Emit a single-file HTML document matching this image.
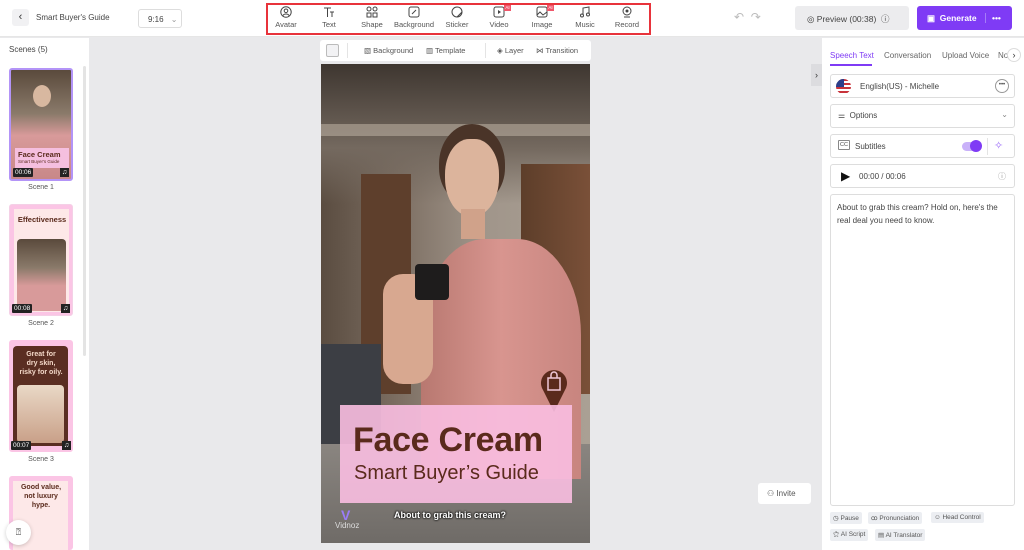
<!DOCTYPE html>
<html><head><meta charset="utf-8">
<style>
*{margin:0;padding:0;box-sizing:border-box}
body{width:1024px;height:550px;overflow:hidden;font-family:"Liberation Sans",sans-serif;background:#e9e9eb;position:relative;color:#333}
.abs{position:absolute}
.top{left:0;top:0;width:1024px;height:37px;background:#fff;border-bottom:1px solid #e6e6e6}
.tool{position:absolute;top:6px;width:40px;text-align:center;font-size:7.5px;color:#555}
.tool svg{display:block;margin:0 auto 2px}
.left{left:0;top:38px;width:89px;height:512px;background:#fff}
.right{left:822px;top:38px;width:202px;height:512px;background:#fff}
.box{position:absolute;left:830px;width:185px;border:1px solid #ddd;border-radius:3px;background:#fff;font-size:8px;color:#444}
.thumb{position:absolute;left:9px;width:64px;border-radius:3px;overflow:hidden}
.tag{position:absolute;background:#eceef2;font-size:6.5px;color:#555;padding:2px 3px;border-radius:2px}
.time{position:absolute;left:2px;bottom:2px;background:#222;color:#fff;font-size:6.5px;padding:1px 2px;border-radius:1px}
.note{position:absolute;right:2px;bottom:2px;width:9px;height:9px;background:#222;color:#fff;font-size:7px;line-height:9px;text-align:center}
.lbl{position:absolute;left:9px;width:64px;text-align:center;font-size:7px;color:#555}
</style></head><body>
<div class="abs top"></div>
<div class="abs" style="left:12px;top:9px;width:17px;height:17px;background:#f1f1f3;border-radius:3px;font-size:11px;text-align:center;line-height:17px;color:#333">‹</div>
<div class="abs" style="left:36px;top:13px;font-size:8px;color:#444">Smart Buyer's Guide</div>
<div class="abs" style="left:138px;top:9px;width:44px;height:19px;border:1px solid #ddd;border-radius:3px;font-size:8px;color:#444;padding:5px 0 0 9px">9:16 <span style="color:#999;margin-left:5px">⌄</span></div>
<div class="abs" style="left:266px;top:3px;width:385px;height:32px;border:2px solid #e8333b"></div>
<div class="tool" style="left:266px"><svg width="12" height="12" viewBox="0 0 12 12"><circle cx="6" cy="6" r="5.2" fill="none" stroke="#444"/><circle cx="6" cy="4.8" r="1.8" fill="none" stroke="#444"/><path d="M3 9.5c1-2 5-2 6 0" fill="none" stroke="#444"/></svg>Avatar</div>
<div class="tool" style="left:309px"><svg width="12" height="12" viewBox="0 0 12 12"><path d="M1 2h7M4.5 2v9M7 6h4M9 6v5" stroke="#444" fill="none"/></svg>Text</div>
<div class="tool" style="left:352px"><svg width="12" height="12" viewBox="0 0 12 12"><circle cx="3" cy="3" r="2" fill="none" stroke="#444"/><circle cx="9" cy="3" r="2" fill="none" stroke="#444"/><rect x="1" y="7" width="4" height="4" fill="none" stroke="#444"/><rect x="7" y="7" width="4" height="4" fill="none" stroke="#444"/></svg>Shape</div>
<div class="tool" style="left:394px"><svg width="12" height="12" viewBox="0 0 12 12"><rect x="1" y="1" width="10" height="10" rx="2" fill="none" stroke="#444"/><path d="M4 8l4-4" stroke="#444"/></svg>Background</div>
<div class="tool" style="left:437px"><svg width="12" height="12" viewBox="0 0 12 12"><path d="M11 6A5 5 0 1 1 6 1c3 0 5 2 5 5l-5 5" fill="none" stroke="#444"/></svg>Sticker</div>
<div class="tool" style="left:479px"><svg width="12" height="12" viewBox="0 0 12 12"><rect x="1" y="1" width="10" height="10" rx="2" fill="none" stroke="#444"/><path d="M5 4v4l3-2z" fill="#444"/></svg>Video</div>
<div class="abs" style="left:504px;top:5px;width:7px;height:6px;background:#f0566a;color:#fff;font-size:4.5px;text-align:center;line-height:6px">AI</div>
<div class="tool" style="left:522px"><svg width="12" height="12" viewBox="0 0 12 12"><rect x="1" y="1" width="10" height="10" rx="2" fill="none" stroke="#444"/><path d="M1 9l3-3 3 3 4-3" fill="none" stroke="#444"/></svg>Image</div>
<div class="abs" style="left:547px;top:5px;width:7px;height:6px;background:#f0566a;color:#fff;font-size:4.5px;text-align:center;line-height:6px">AI</div>
<div class="tool" style="left:565px"><svg width="12" height="12" viewBox="0 0 12 12"><path d="M4 9V2l6-1v7" fill="none" stroke="#444"/><circle cx="3" cy="9.5" r="1.5" fill="none" stroke="#444"/><circle cx="9" cy="8.5" r="1.5" fill="none" stroke="#444"/></svg>Music</div>
<div class="tool" style="left:607px"><svg width="12" height="12" viewBox="0 0 12 12"><circle cx="6" cy="5" r="4" fill="none" stroke="#444"/><circle cx="6" cy="5" r="1.5" fill="#444"/><path d="M3 11h6" stroke="#444"/></svg>Record</div>
<div class="abs" style="left:734px;top:10px;font-size:12px;color:#bbb">↶ &nbsp;↷</div>
<div class="abs" style="left:795px;top:6px;width:114px;height:24px;background:#ececee;border-radius:3px;font-size:8.5px;color:#444;padding:7px 0 0 12px">◎ Preview (00:38) &nbsp;ⓘ</div>
<div class="abs" style="left:917px;top:6px;width:95px;height:24px;background:#7f3bf5;border-radius:3px;font-size:8.5px;color:#fff;font-weight:bold;padding:7px 0 0 10px">▣ &nbsp;Generate <span style="border-left:1px solid #a57cf8;margin-left:6px;padding-left:6px">•••</span></div>

<div class="abs left"></div>
<div class="abs" style="left:9px;top:45px;font-size:8px;color:#444">Scenes (5)</div>
<div class="abs" style="left:83px;top:66px;width:3px;height:290px;background:#e4e4e4;border-radius:2px"></div>
<div class="thumb" style="top:68px;height:113px;border:2px solid #b394f7;background:linear-gradient(#5a4a3c,#8a7a6a 40%,#d89a9a 60%,#c88888)">
<div class="abs" style="left:22px;top:15px;width:18px;height:22px;border-radius:50%;background:#d8b8a0"></div>
<div class="abs" style="left:4px;top:78px;width:54px;height:20px;background:#f5bfdf;font-size:7.5px;font-weight:bold;color:#5a2a1c;padding:2px 0 0 3px">Face Cream<div style="font-size:4.5px;font-weight:normal">Smart Buyer's Guide</div></div>
<div class="time">00:06</div><div class="note">♫</div></div>
<div class="lbl" style="top:184px">Scene 1</div>
<div class="thumb" style="top:204px;height:112px;background:#fbc5e5;border:1px solid #f4d0e6">
<div class="abs" style="left:4px;top:4px;width:55px;height:103px;background:#fde8e8"></div>
<div class="abs" style="left:5px;top:10px;width:54px;text-align:center;font-size:7.5px;font-weight:bold;color:#5a2a1c">Effectiveness</div>
<div class="abs" style="left:7px;top:34px;width:49px;height:72px;border-radius:4px;background:linear-gradient(#5a4a3c,#8a7a6a 40%,#d89a9a 65%)"></div>
<div class="time">00:08</div><div class="note">♫</div></div>
<div class="lbl" style="top:320px">Scene 2</div>
<div class="thumb" style="top:340px;height:112px;background:#fbc5e5">
<div class="abs" style="left:4px;top:6px;width:55px;height:100px;border-radius:4px;background:#5a2e22"></div>
<div class="abs" style="left:5px;top:10px;width:54px;text-align:center;font-size:7px;font-weight:bold;color:#f3d8c8;line-height:9px">Great for<br>dry skin,<br>risky for oily.</div>
<div class="abs" style="left:8px;top:45px;width:47px;height:58px;border-radius:4px;background:linear-gradient(#e9d8c6,#c9a088)"></div>
<div class="time">00:07</div><div class="note">♫</div></div>
<div class="lbl" style="top:456px">Scene 3</div>
<div class="thumb" style="top:476px;height:74px;background:#fbc5e5">
<div class="abs" style="left:4px;top:5px;width:55px;height:70px;background:#fde8e8"></div>
<div class="abs" style="left:5px;top:7px;width:54px;text-align:center;font-size:7px;font-weight:bold;color:#5a2a1c;line-height:9px">Good value,<br>not luxury<br>hype.</div></div>
<div class="abs" style="left:6px;top:520px;width:25px;height:25px;border-radius:50%;background:#fff;box-shadow:0 1px 4px rgba(0,0,0,.2);font-size:9px;text-align:center;line-height:25px">⍰</div>

<div class="abs" style="left:320px;top:40px;width:271px;height:21px;background:#fff;border-radius:3px;font-size:7.5px;color:#555">
<div class="abs" style="left:6px;top:4px;width:13px;height:13px;border:1px solid #bbb;border-radius:2px;background:#f2f2f4"></div>
<div class="abs" style="left:27px;top:3px;width:1px;height:15px;background:#e4e4e4"></div>
<span class="abs" style="left:44px;top:6px">▧ Background</span><span class="abs" style="left:106px;top:6px">▥ Template</span>
<div class="abs" style="left:165px;top:3px;width:1px;height:15px;background:#e4e4e4"></div>
<span class="abs" style="left:177px;top:6px">◈ Layer</span><span class="abs" style="left:216px;top:6px">⋈ Transition</span></div>

<div class="abs" style="left:321px;top:64px;width:269px;height:479px;overflow:hidden;background:linear-gradient(90deg,#5a4c40 0%,#7e7064 30%,#a0958a 60%,#aaa094 100%)">
<div class="abs" style="left:0;top:0;width:269px;height:140px;background:linear-gradient(#3e3630,#74695f 60%,rgba(0,0,0,0))"></div>
<div class="abs" style="left:0;top:60px;width:269px;height:12px;background:#b8ac9e;opacity:.6"></div>
<div class="abs" style="left:200px;top:100px;width:69px;height:230px;background:linear-gradient(90deg,#5d3e2a,#7a5038)"></div>
<div class="abs" style="left:40px;top:110px;width:50px;height:220px;background:#5e3f2c"></div>
<div class="abs" style="left:0;top:280px;width:60px;height:120px;background:#3c3e44"></div>
<div class="abs" style="left:0;top:380px;width:269px;height:99px;background:linear-gradient(#8a8580,#6f6b67)"></div>
<div class="abs" style="left:118px;top:60px;width:66px;height:80px;border-radius:50% 50% 45% 45%;background:#4a3428"></div>
<div class="abs" style="left:124px;top:75px;width:54px;height:78px;border-radius:45% 45% 50% 50%;background:#dcb49c"></div>
<div class="abs" style="left:140px;top:145px;width:24px;height:30px;background:#d0a28a"></div>
<div class="abs" style="left:100px;top:175px;width:160px;height:240px;border-radius:40% 40% 0 0;background:linear-gradient(90deg,#b87870,#d8958f 50%,#c8857f)"></div>
<div class="abs" style="left:62px;top:210px;width:50px;height:110px;border-radius:20px;background:#d8a890"></div>
<div class="abs" style="left:94px;top:200px;width:34px;height:36px;border-radius:4px;background:#1e1c1c"></div>
<div class="abs" style="left:219px;top:304px;width:28px;height:44px"><svg width="28" height="44" viewBox="0 0 28 44"><path d="M14 44L3 22A13 13 0 1 1 25 22Z" fill="#5a2a1c"/><rect x="8" y="10" width="12" height="12" fill="none" stroke="#f0c8d8" stroke-width="1.5"/><path d="M11 10V7a3 3 0 0 1 6 0v3" fill="none" stroke="#f0c8d8" stroke-width="1.5"/></svg></div>
<div class="abs" style="left:19px;top:341px;width:232px;height:98px;background:rgba(250,190,225,.9)"></div>
<div class="abs" style="left:32px;top:356px;font-size:34px;font-weight:bold;color:#5a2a1c;letter-spacing:-0.3px;line-height:40px">Face Cream</div>
<div class="abs" style="left:33px;top:397px;font-size:20px;color:#5a2a1c;line-height:24px">Smart Buyer’s Guide</div>
<div class="abs" style="left:20px;top:443px;font-size:14px;color:#9a7cf8;font-weight:bold">V</div>
<div class="abs" style="left:14px;top:457px;font-size:8px;color:#ddd">Vidnoz</div>
<div class="abs" style="left:73px;top:446px;font-size:9px;font-weight:bold;color:#fff;text-shadow:0 0 2px #000,0 0 2px #000">About to grab this cream?</div>
</div>
<div class="abs" style="left:811px;top:64px;width:11px;height:22px;background:#dcdcdf;font-size:9px;text-align:center;line-height:22px;color:#333">›</div>
<div class="abs" style="left:758px;top:483px;width:53px;height:21px;background:#fff;border-radius:3px;font-size:8px;color:#555;padding:6px 0 0 9px">⚇ Invite</div>

<div class="abs right"></div>
<div class="abs" style="left:830px;top:51px;font-size:8px;color:#7f3bf5">Speech Text</div>
<div class="abs" style="left:830px;top:64px;width:42px;height:2px;background:#7f3bf5"></div>
<div class="abs" style="left:884px;top:51px;font-size:8px;color:#666">Conversation</div>
<div class="abs" style="left:942px;top:51px;font-size:8px;color:#666">Upload Voice</div>
<div class="abs" style="left:998px;top:51px;font-size:8px;color:#666">No</div>
<div class="abs" style="left:1007px;top:48px;width:14px;height:14px;border-radius:50%;background:#fff;border:1px solid #ddd;font-size:9px;text-align:center;line-height:12px">›</div>
<div class="box" style="top:74px;height:24px"><div class="abs" style="left:5px;top:4px;width:15px;height:15px;border-radius:50%;overflow:hidden;background:repeating-linear-gradient(#c8333b 0 2px,#fff 2px 4px)"><div style="width:8px;height:8px;background:#2b3e8a"></div></div><span class="abs" style="left:29px;top:7px">English(US) - Michelle</span><span class="abs" style="right:5px;top:4px;width:14px;height:14px;border:1px solid #999;border-radius:50%;font-size:6px;text-align:center;line-height:11px">•••</span></div>
<div class="box" style="top:104px;height:24px"><span class="abs" style="left:7px;top:6px">⚌ &nbsp;Options</span><span class="abs" style="right:6px;top:5px;color:#888">⌄</span></div>
<div class="box" style="top:134px;height:24px"><span class="abs" style="left:7px;top:5px;border:1px solid #888;font-size:5.5px;padding:1px 1px;border-radius:1px">CC</span><span class="abs" style="left:24px;top:7px">Subtitles</span><div class="abs" style="left:131px;top:7px;width:18px;height:9px;border-radius:5px;background:#c9b1f9"></div><div class="abs" style="left:139px;top:5px;width:12px;height:12px;border-radius:50%;background:#7f3bf5"></div><div class="abs" style="left:156px;top:3px;width:1px;height:17px;background:#e4e4e4"></div><span class="abs" style="left:163px;top:4px;color:#9b6cf8;font-size:11px">✧</span></div>
<div class="box" style="top:164px;height:24px"><span class="abs" style="left:10px;top:4px;font-size:12px;color:#111">▶</span><span class="abs" style="left:28px;top:7px">00:00 / 00:06</span><span class="abs" style="right:8px;top:6px;color:#999">ⓘ</span></div>
<div class="box" style="top:194px;height:312px;padding:6px;line-height:13px">About to grab this cream? Hold on, here's the real deal you need to know.</div>
<div class="tag" style="left:830px;top:512px">◷ Pause</div>
<div class="tag" style="left:868px;top:512px">ꝏ Pronunciation</div>
<div class="tag" style="left:931px;top:512px">☺ Head Control</div>
<div class="tag" style="left:830px;top:529px">⚝ AI Script</div>
<div class="tag" style="left:875px;top:529px">▤ AI Translator</div>
</body></html>
